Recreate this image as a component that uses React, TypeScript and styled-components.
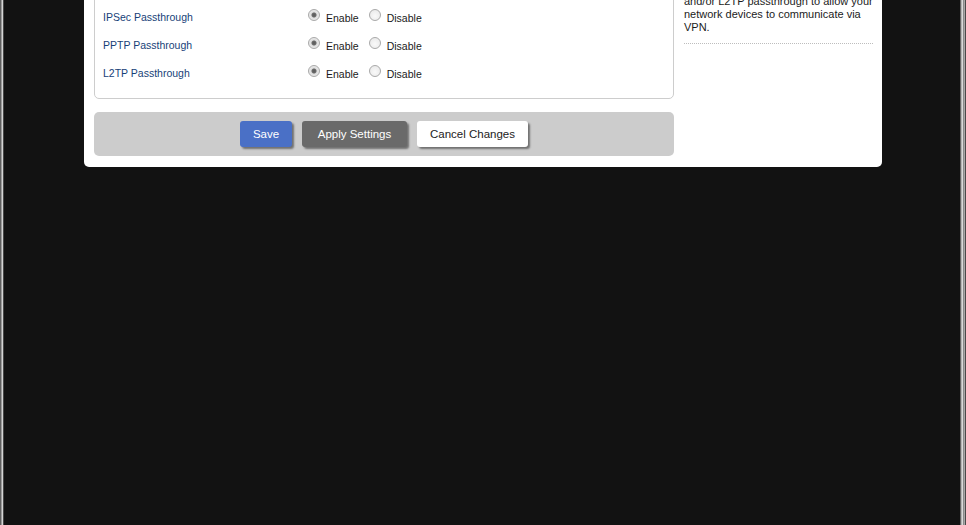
import React, { useState } from 'react';
import styled, { createGlobalStyle } from 'styled-components';

const GlobalStyle = createGlobalStyle`
  html, body {
    margin: 0;
    padding: 0;
    background: #111;
    overflow: hidden;
  }
  body {
    font-family: Tahoma, 'Liberation Sans', Arial, sans-serif;
    font-size: 10.5px;
  }
`;

const Frame = styled.div`
  min-height: 100vh;
  background: #121212;
  box-shadow: inset 1px 0 0 #5e5e5e, inset 2px 0 0 #9c9c9c, inset 3px 0 0 #d4d4d4,
    inset 4px 0 0 #484848, inset -1px 0 0 #4a4a4a, inset -2px 0 0 #a8a8a8,
    inset -3px 0 0 #8a8a8a, inset -4px 0 0 #dadada, inset -5px 0 0 #b4b4b4,
    inset -6px 0 0 #646464;
  overflow: hidden;
`;

const Card = styled.div`
  width: 798px;
  box-sizing: border-box;
  margin: -41px auto 0;
  padding: 10px 9px 11px 10px;
  background: #fff;
  border-radius: 0 0 5px 5px;
  display: flex;
  gap: 10px;
`;

const Main = styled.div`
  width: 580px;
  display: flex;
  flex-direction: column;
  gap: 13px;
`;

const Fieldset = styled.div`
  border: 1px solid #cdcdcd;
  border-radius: 5px;
  padding: 5px 8px 11px;
`;

const Row = styled.div`
  height: 28px;
  display: flex;
  align-items: center;
`;

const Label = styled.span<{ $head?: boolean }>`
  width: 205px;
  color: ${(p) => (p.$head ? '#222' : '#173f78')};
  font-weight: ${(p) => (p.$head ? 'bold' : 'normal')};
`;

const Choice = styled.label`
  display: flex;
  align-items: center;
  margin-right: 10px;
  color: #1a1a1a;
  cursor: pointer;
`;

const Radio = styled.input`
  appearance: none;
  width: 12px;
  height: 12px;
  margin: 0 6px 0 0;
  border: 1px solid #a9a9a9;
  border-radius: 50%;
  background: radial-gradient(circle at 50% 60%, #f9f9f9 0%, #e6e6e6 100%);
  position: relative;
  top: -2px;

  &:checked {
    background: radial-gradient(circle, #5a5a5a 0, #6a6a6a 2px, #dedede 3px, #f4f4f4 100%);
  }
`;

const ChoiceText = styled.span`
  padding-top: 1px;
`;

const ButtonBar = styled.div`
  background: #cccccc;
  border-radius: 5px;
  padding: 9px 0;
  display: flex;
  justify-content: center;
  gap: 10px;
`;

const buttonLook = {
  save: { bg: '#4a70c6', fg: '#fff', width: 52 },
  apply: { bg: '#6a6a6a', fg: '#fff', width: 105 },
  cancel: { bg: '#fff', fg: '#222', width: 111 },
};

const Button = styled.button<{ $kind: 'save' | 'apply' | 'cancel' }>`
  height: 26px;
  width: ${(p) => buttonLook[p.$kind].width}px;
  padding: 0;
  border: none;
  border-radius: 3px;
  font-family: Tahoma, 'Liberation Sans', Arial, sans-serif;
  font-size: 11.5px;
  box-shadow: 2px 2px 2px rgba(0, 0, 0, 0.45);
  background: ${(p) => buttonLook[p.$kind].bg};
  color: ${(p) => buttonLook[p.$kind].fg};
  cursor: pointer;
`;

const Side = styled.div`
  width: 189px;
`;

const Help = styled.p`
  margin: 0;
  padding: 13px 0 9px;
  font-size: 11px;
  line-height: 13px;
  color: #1b1b1b;
  border-bottom: 1px dotted #bdbdbd;
  white-space: nowrap;
`;

const rows = ['IPSec Passthrough', 'PPTP Passthrough', 'L2TP Passthrough'];

export default function App() {
  const [values, setValues] = useState<Record<string, string>>({
    'IPSec Passthrough': 'enable',
    'PPTP Passthrough': 'enable',
    'L2TP Passthrough': 'enable',
  });

  return (
    <>
      <GlobalStyle />
      <Frame>
        <Card>
          <Main>
            <Fieldset>
              <Row>
                <Label $head>VPN Passthrough</Label>
              </Row>
              {rows.map((name) => (
                <Row key={name}>
                  <Label>{name}</Label>
                  <Choice>
                    <Radio
                      type='radio'
                      name={name}
                      checked={values[name] === 'enable'}
                      onChange={() => setValues({ ...values, [name]: 'enable' })}
                    />
                    <ChoiceText>Enable</ChoiceText>
                  </Choice>
                  <Choice>
                    <Radio
                      type='radio'
                      name={name}
                      checked={values[name] === 'disable'}
                      onChange={() => setValues({ ...values, [name]: 'disable' })}
                    />
                    <ChoiceText>Disable</ChoiceText>
                  </Choice>
                </Row>
              ))}
            </Fieldset>
            <ButtonBar>
              <Button $kind='save'>Save</Button>
              <Button $kind='apply'>Apply Settings</Button>
              <Button $kind='cancel'>Cancel Changes</Button>
            </ButtonBar>
          </Main>
          <Side>
            <Help>
              Choose whether to enable IPSec, PPTP
              <br />
              and/or L2TP passthrough to allow your
              <br />
              network devices to communicate via
              <br />
              VPN.
            </Help>
          </Side>
        </Card>
      </Frame>
    </>
  );
}
